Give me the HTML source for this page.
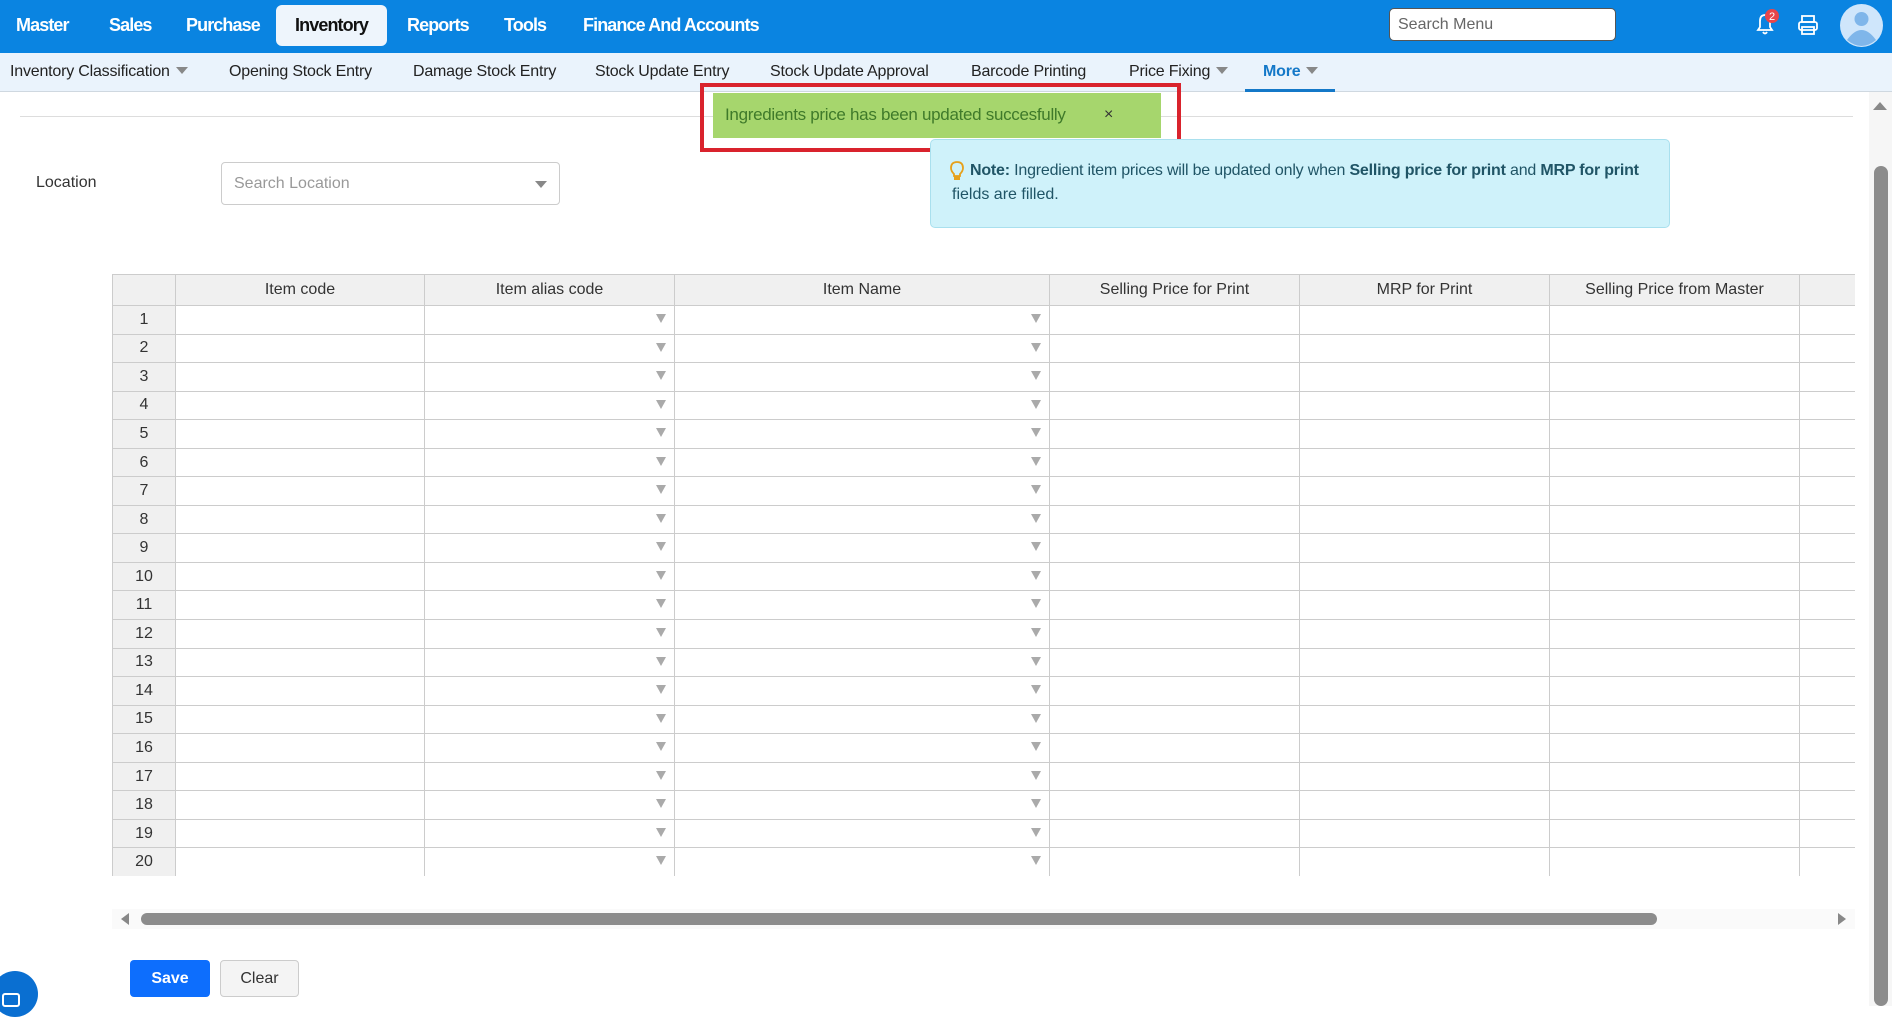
<!DOCTYPE html>
<html><head><meta charset="utf-8">
<style>
*{box-sizing:border-box;margin:0;padding:0}
body{width:1892px;height:1006px;overflow:hidden;background:#fff;font-family:"Liberation Sans",sans-serif;position:relative;color:#222}
.abs{position:absolute}
#top{left:0;top:0;width:1892px;height:53px;background:#0a84e1}
.m{position:absolute;top:15px;color:#fff;font-weight:bold;font-size:18px;letter-spacing:-0.9px}
#inv{left:276px;top:5px;width:111px;height:41px;background:#eef5fc;border-radius:6px;color:#111;font-weight:bold;font-size:18px;letter-spacing:-0.9px;text-align:center;line-height:41px}
#search{left:1389px;top:8px;width:227px;height:33px;background:#fff;border:1px solid #555;border-radius:5px;font-size:16px;color:#666;padding-left:8px;line-height:31px}
#sub{left:0;top:53px;width:1892px;height:39px;background:#eaf3fc;border-bottom:1px solid #cfd8e0}
.s{position:absolute;top:10px;font-size:16px;color:#222;letter-spacing:-0.2px}
.tri{display:inline-block;width:0;height:0;border-left:6px solid transparent;border-right:6px solid transparent;border-top:7px solid #888;margin-left:6px;vertical-align:2px}
table{border-collapse:collapse;table-layout:fixed;position:absolute;left:0;top:0;width:1986px}
td,th{border:1px solid #ccc;height:28.55px;font-size:16px;font-weight:normal;color:#333;position:relative;padding:0}
th{background:#f0f0f0;height:31px}
td.n{background:#f0f0f0;text-align:center}
td.d::after{content:"";position:absolute;right:8px;top:8px;border-left:5px solid transparent;border-right:5px solid transparent;border-top:9px solid #aaa}
</style></head><body>
<div id="top" class="abs"></div>
<div class="m" style="left:16px">Master</div>
<div class="m" style="left:109px">Sales</div>
<div class="m" style="left:186px">Purchase</div>
<div id="inv" class="abs">Inventory</div>
<div class="m" style="left:407px">Reports</div>
<div class="m" style="left:504px">Tools</div>
<div class="m" style="left:583px">Finance And Accounts</div>
<div id="search" class="abs">Search Menu</div>
<svg class="abs" style="left:1750px;top:8px" width="30" height="32" viewBox="0 0 30 32"><path d="M8 22 L10 19 L10 13 Q10 7 15 7 Q20 7 20 13 L20 19 L22 22 Z M13 24 Q15 27 17 24" fill="none" stroke="#fff" stroke-width="1.8"/><circle cx="22" cy="8" r="7" fill="#e8454a"/><text x="22" y="12" font-size="11" fill="#fff" text-anchor="middle" font-family="Liberation Sans">2</text></svg>
<svg class="abs" style="left:1797px;top:14px" width="22" height="22" viewBox="0 0 22 22"><rect x="5" y="2" width="12" height="6" fill="none" stroke="#fff" stroke-width="1.8"/><rect x="2" y="8" width="18" height="8" rx="2" fill="none" stroke="#fff" stroke-width="1.8"/><rect x="5" y="13" width="12" height="7" fill="none" stroke="#fff" stroke-width="1.8"/></svg>
<svg class="abs" style="left:1840px;top:4px" width="43" height="43" viewBox="0 0 43 43"><circle cx="21.5" cy="21.5" r="21.5" fill="#cfe6fb"/><circle cx="21.5" cy="15" r="7" fill="#7fb6ea"/><path d="M7 36 Q21.5 16 36 36 Q21.5 48 7 36Z" fill="#7fb6ea"/></svg>
<div id="sub" class="abs"></div>
<div class="s" style="left:10px;top:63px">Inventory Classification<span class="tri"></span></div>
<div class="s" style="left:229px;top:63px">Opening Stock Entry</div>
<div class="s" style="left:413px;top:63px">Damage Stock Entry</div>
<div class="s" style="left:595px;top:63px">Stock Update Entry</div>
<div class="s" style="left:770px;top:63px">Stock Update Approval</div>
<div class="s" style="left:971px;top:63px">Barcode Printing</div>
<div class="s" style="left:1129px;top:63px">Price Fixing<span class="tri"></span></div>
<div class="s" style="left:1263px;top:63px;color:#1478c8;font-weight:bold">More<span class="tri"></span></div>
<div class="abs" style="left:1245px;top:89px;width:90px;height:3px;background:#1478c8"></div>
<div class="abs" style="left:20px;top:116px;width:1833px;height:1px;background:#ddd"></div>
<div class="abs" style="left:700px;top:83px;width:481px;height:69px;border:4px solid #d9232d"></div>
<div class="abs" style="left:713px;top:93px;width:448px;height:45px;background:#a6d66d"></div>
<div class="abs" style="left:725px;top:105px;font-size:17px;color:#3f7a2a;letter-spacing:-0.3px">Ingredients price has been updated succesfully</div>
<div class="abs" style="left:1104px;top:106px;font-size:16px;color:#333">×</div>
<div class="abs" style="left:930px;top:139px;width:740px;height:89px;background:#cff2fa;border:1px solid #a9e0ee;border-radius:5px"></div>
<svg class="abs" style="left:950px;top:161px" width="14" height="20" viewBox="0 0 14 20"><path d="M7 1 Q13 1 13 7 Q13 10 10 13 L10 15 L4 15 L4 13 Q1 10 1 7 Q1 1 7 1Z" fill="none" stroke="#e6a11c" stroke-width="1.8"/><rect x="4" y="15" width="6" height="4" fill="#e6a11c"/></svg>
<div class="abs" style="left:970px;top:162px;font-size:16px;color:#205566;letter-spacing:-0.2px"><b>Note:</b> Ingredient item prices will be updated only when <b>Selling price for print</b> and <b>MRP for print</b></div>
<div class="abs" style="left:952px;top:186px;font-size:16px;color:#205566">fields are filled.</div>
<div class="abs" style="left:36px;top:174px;font-size:16px;color:#333">Location</div>
<div class="abs" style="left:221px;top:162px;width:339px;height:43px;border:1px solid #ccc;border-radius:4px;font-size:16px;color:#999;padding-left:12px;line-height:41px">Search Location<span style="position:absolute;right:12px;top:18px;border-left:6px solid transparent;border-right:6px solid transparent;border-top:7px solid #888"></span></div>
<div class="abs" style="left:112px;top:274px;width:1743px;height:602px;overflow:hidden">
<table>
<colgroup><col style="width:63px"><col style="width:249px"><col style="width:250px"><col style="width:375px"><col style="width:250px"><col style="width:250px"><col style="width:250px"><col style="width:299px"></colgroup>
<tr><th></th><th>Item code</th><th>Item alias code</th><th>Item Name</th><th>Selling Price for Print</th><th>MRP for Print</th><th>Selling Price from Master</th><th></th></tr>
<tr><td class="n">1</td><td></td><td class="d"></td><td class="d"></td><td></td><td></td><td></td><td></td></tr>
<tr><td class="n">2</td><td></td><td class="d"></td><td class="d"></td><td></td><td></td><td></td><td></td></tr>
<tr><td class="n">3</td><td></td><td class="d"></td><td class="d"></td><td></td><td></td><td></td><td></td></tr>
<tr><td class="n">4</td><td></td><td class="d"></td><td class="d"></td><td></td><td></td><td></td><td></td></tr>
<tr><td class="n">5</td><td></td><td class="d"></td><td class="d"></td><td></td><td></td><td></td><td></td></tr>
<tr><td class="n">6</td><td></td><td class="d"></td><td class="d"></td><td></td><td></td><td></td><td></td></tr>
<tr><td class="n">7</td><td></td><td class="d"></td><td class="d"></td><td></td><td></td><td></td><td></td></tr>
<tr><td class="n">8</td><td></td><td class="d"></td><td class="d"></td><td></td><td></td><td></td><td></td></tr>
<tr><td class="n">9</td><td></td><td class="d"></td><td class="d"></td><td></td><td></td><td></td><td></td></tr>
<tr><td class="n">10</td><td></td><td class="d"></td><td class="d"></td><td></td><td></td><td></td><td></td></tr>
<tr><td class="n">11</td><td></td><td class="d"></td><td class="d"></td><td></td><td></td><td></td><td></td></tr>
<tr><td class="n">12</td><td></td><td class="d"></td><td class="d"></td><td></td><td></td><td></td><td></td></tr>
<tr><td class="n">13</td><td></td><td class="d"></td><td class="d"></td><td></td><td></td><td></td><td></td></tr>
<tr><td class="n">14</td><td></td><td class="d"></td><td class="d"></td><td></td><td></td><td></td><td></td></tr>
<tr><td class="n">15</td><td></td><td class="d"></td><td class="d"></td><td></td><td></td><td></td><td></td></tr>
<tr><td class="n">16</td><td></td><td class="d"></td><td class="d"></td><td></td><td></td><td></td><td></td></tr>
<tr><td class="n">17</td><td></td><td class="d"></td><td class="d"></td><td></td><td></td><td></td><td></td></tr>
<tr><td class="n">18</td><td></td><td class="d"></td><td class="d"></td><td></td><td></td><td></td><td></td></tr>
<tr><td class="n">19</td><td></td><td class="d"></td><td class="d"></td><td></td><td></td><td></td><td></td></tr>
<tr><td class="n">20</td><td></td><td class="d"></td><td class="d"></td><td></td><td></td><td></td><td></td></tr>
</table></div>
<div class="abs" style="left:112px;top:909px;width:1743px;height:20px;background:#fafafa"></div>
<div class="abs" style="left:121px;top:913px;border-top:6px solid transparent;border-bottom:6px solid transparent;border-right:8px solid #888"></div>
<div class="abs" style="left:141px;top:913px;width:1516px;height:12px;background:#8c8c8c;border-radius:6px"></div>
<div class="abs" style="left:1838px;top:913px;border-top:6px solid transparent;border-bottom:6px solid transparent;border-left:8px solid #888"></div>
<div class="abs" style="left:130px;top:960px;width:80px;height:37px;background:#0d6efd;border-radius:4px;color:#fff;font-size:16px;text-align:center;line-height:37px;font-weight:bold">Save</div>
<div class="abs" style="left:220px;top:960px;width:79px;height:37px;background:#f4f4f4;border:1px solid #ccc;border-radius:4px;color:#333;font-size:16px;text-align:center;line-height:35px">Clear</div>
<div class="abs" style="left:1869px;top:92px;width:23px;height:914px;background:#f6f6f6"></div>
<div class="abs" style="left:1873px;top:102px;border-left:7px solid transparent;border-right:7px solid transparent;border-bottom:8px solid #888"></div>
<div class="abs" style="left:1874px;top:166px;width:14px;height:840px;background:#8c8c8c;border-radius:7px"></div>
<div class="abs" style="left:-8px;top:971px;width:46px;height:46px;border-radius:50%;background:#0a6fd1"></div>
<div class="abs" style="left:2px;top:993px;width:18px;height:14px;border:2px solid #fff;border-radius:3px"></div>
</body></html>
